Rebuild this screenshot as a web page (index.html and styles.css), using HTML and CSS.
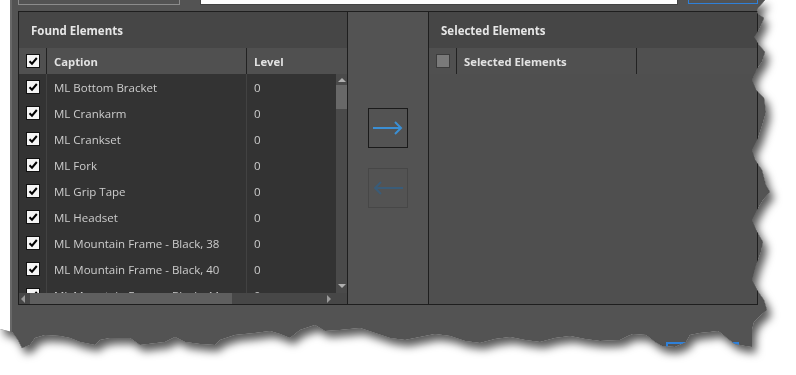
FILE: index.html
```html
<!DOCTYPE html>
<html lang="en">
<head>
    <meta charset="UTF-8">
    <title>Element Picker</title>
    <link rel="stylesheet" href="styles.css">
</head>
<body>
<div class="stage">
    <div class="shot">
        <div class="strip"></div>
        <div class="window">
            <div class="topbar">
                <div class="search-box"></div>
                <div class="text-input"></div>
                <div class="top-btn"></div>
            </div>

            <div class="panes">
                <!-- left: found elements -->
                <div class="pane found">
                    <div class="pane-title">Found Elements</div>
                    <div class="col-head">
                        <div class="cell cell-check"><span class="check on"></span></div>
                        <div class="cell cell-caption">Caption</div>
                        <div class="cell cell-level">Level</div>
                        <div class="cell cell-corner"></div>
                    </div>
                    <div class="list-body">
                        <ul class="list">
                            <li class="row"><div class="cell cell-check"><span class="check on"></span></div><div class="cell cell-caption">ML Bottom Bracket</div><div class="cell cell-level">0</div></li>
                            <li class="row"><div class="cell cell-check"><span class="check on"></span></div><div class="cell cell-caption">ML Crankarm</div><div class="cell cell-level">0</div></li>
                            <li class="row"><div class="cell cell-check"><span class="check on"></span></div><div class="cell cell-caption">ML Crankset</div><div class="cell cell-level">0</div></li>
                            <li class="row"><div class="cell cell-check"><span class="check on"></span></div><div class="cell cell-caption">ML Fork</div><div class="cell cell-level">0</div></li>
                            <li class="row"><div class="cell cell-check"><span class="check on"></span></div><div class="cell cell-caption">ML Grip Tape</div><div class="cell cell-level">0</div></li>
                            <li class="row"><div class="cell cell-check"><span class="check on"></span></div><div class="cell cell-caption">ML Headset</div><div class="cell cell-level">0</div></li>
                            <li class="row"><div class="cell cell-check"><span class="check on"></span></div><div class="cell cell-caption">ML Mountain Frame - Black, 38</div><div class="cell cell-level">0</div></li>
                            <li class="row"><div class="cell cell-check"><span class="check on"></span></div><div class="cell cell-caption">ML Mountain Frame - Black, 40</div><div class="cell cell-level">0</div></li>
                            <li class="row"><div class="cell cell-check"><span class="check on"></span></div><div class="cell cell-caption">ML Mountain Frame - Black, 44</div><div class="cell cell-level">0</div></li>
                        </ul>
                        <div class="vscroll">
                            <span class="arrow-up"></span>
                            <span class="vthumb"></span>
                            <span class="vspace"></span>
                            <span class="arrow-down"></span>
                        </div>
                    </div>
                    <div class="hscroll">
                        <div class="htrack">
                            <span class="arrow-left"></span>
                            <span class="hthumb"></span>
                            <span class="hspace"></span>
                            <span class="arrow-right"></span>
                        </div>
                        <div class="hcorner"></div>
                    </div>
                </div>

                <!-- middle: move buttons -->
                <div class="mover">
                    <button class="move-btn">
                        <svg width="38" height="38" viewBox="0 0 38 38"><path d="M4 19 H32 M26 13 L32 19 L26 25" fill="none" stroke="#3b8fd4" stroke-width="2"/></svg>
                    </button>
                    <button class="move-btn disabled">
                        <svg width="38" height="38" viewBox="0 0 38 38"><path d="M6 19 H34 M12 13 L6 19 L12 25" fill="none" stroke="#3a5c78" stroke-width="2"/></svg>
                    </button>
                </div>

                <!-- right: selected elements -->
                <div class="pane selected">
                    <div class="pane-title">Selected Elements</div>
                    <div class="col-head">
                        <div class="cell cell-check"><span class="check off"></span></div>
                        <div class="cell cell-sel">Selected Elements</div>
                        <div class="cell"></div>
                    </div>
                </div>
            </div>

            <div class="bottom">
                <div class="bottom-btn"></div>
                <div class="bottom-btn"></div>
            </div>
        </div>
    </div>
</div>
</body>
</html>
```

FILE: styles.css
```css
body{
    margin: 0;
    background-color: #fff;
    font-family: "Open Sans", "Noto Sans", sans-serif;
}
.stage{
    width: 796px;
    height: 375px;
    filter: drop-shadow(0 0 0.6px #2a2a2a) drop-shadow(4px 6px 4px rgba(0, 0, 0, .65));
}
/*torn screenshot edge*/
.shot{
    display: flex;
    width: 772px;
    height: 350px;
    background-color: #fff;
    clip-path: polygon(0 0, 765px 0, 758px 8px, 757px 13px, 764px 18px, 760px 28px, 754px 37px, 759px 45px, 765px 52px, 762px 62px, 756px 70px, 752px 80px, 756px 90px, 764px 98px, 766px 112px, 762px 126px, 758px 138px, 752px 150px, 755px 160px, 762px 170px, 766px 185px, 770px 192px, 763px 200px, 757px 210px, 752px 220px, 756px 230px, 763px 242px, 761px 252px, 756px 265px, 752px 280px, 757px 290px, 764px 300px, 767px 310px, 760px 316px, 754px 322px, 752px 330px, 752px 347px, 745px 346px, 735px 344px, 728px 339px, 722px 334px, 718px 331px, 710px 332px, 700px 333px, 690px 335px, 686px 342px, 675px 347px, 662px 346px, 655px 342px, 646px 335px, 633px 334px, 628px 336px, 620px 340px, 600px 341px, 585px 339px, 570px 336px, 555px 338px, 540px 342px, 525px 340px, 510px 337px, 495px 339px, 480px 343px, 465px 341px, 450px 336px, 435px 334px, 420px 337px, 405px 340px, 390px 338px, 375px 333px, 360px 328px, 340px 330px, 325px 331px, 315px 325px, 300px 330px, 290px 338px, 280px 334px, 270px 331px, 255px 333px, 235px 335px, 220px 340px, 215px 345px, 200px 344px, 185px 342px, 175px 337px, 165px 342px, 140px 345px, 130px 338px, 110px 338px, 100px 340px, 95px 345px, 80px 342px, 70px 338px, 60px 336px, 45px 335px, 35px 338px, 30px 345px, 22px 348px, 18px 340px, 12px 332px, 0 329px);
}
.strip{
    width: 10px;
    flex: none;
}
.window{
    flex: 1;
    display: flex;
    flex-direction: column;
    overflow: hidden;
    background-color: #535353;
    border-left: 2px solid #686868;
}
/*top bar remains*/
.topbar{
    flex: none;
    height: 11px;
    display: flex;
    align-items: flex-start;
    padding-left: 6px;
}
.search-box{
    width: 160px;
    height: 4px;
    border: 1px solid #8c8c8c;
    border-top: none;
}
.text-input{
    width: 476px;
    height: 4px;
    margin-left: 20px;
    background-color: #fff;
    border: 1px solid #444;
    border-top: none;
}
.top-btn{
    width: 68px;
    height: 3px;
    margin-left: 10px;
    border: 1px solid #2f80d8;
    border-top: none;
}
/*panes*/
.panes{
    flex: none;
    display: flex;
    width: 738px;
    height: 292px;
    margin-left: 6px;
    border: 1px solid #1e1e1e;
}
.pane{
    width: 328px;
    display: flex;
    flex-direction: column;
    background-color: #4f4f4f;
}
.pane-title{
    flex: none;
    height: 36px;
    line-height: 37px;
    padding-left: 12px;
    background-color: #464646;
    color: #e6e6e6;
    font-size: 11.5px;
    font-weight: bold;
}
.col-head{
    flex: none;
    height: 26px;
    display: flex;
    background-color: #505050;
    color: #e2e2e2;
    font-size: 11.3px;
    font-weight: bold;
}
.cell{
    display: flex;
    align-items: center;
    padding-left: 7px;
    box-sizing: border-box;
    white-space: nowrap;
    overflow: hidden;
}
.cell-check{
    width: 28px;
    border-right: 1px solid #222;
}
.cell-caption{
    width: 200px;
    border-right: 1px solid #222;
}
.cell-level{
    width: 89px;
}
.cell-corner{
    width: 11px;
    padding: 0;
}
.cell-sel{
    width: 180px;
    border-right: 1px solid #222;
}
.check{
    display: inline-block;
    width: 14px;
    height: 14px;
    box-sizing: border-box;
    border: 1px solid #111;
}
.check.on{
    background: #f4f4f4 url("data:image/svg+xml;utf8,<svg xmlns='http://www.w3.org/2000/svg' width='12' height='12' viewBox='0 0 12 12'><path d='M2.5 6.2 L5 8.7 L9.8 3' fill='none' stroke='black' stroke-width='2'/></svg>") no-repeat center;
}
.check.off{
    background-color: #7a7a7a;
    border-color: #3c3c3c;
}
.list-body{
    flex: none;
    height: 219px;
    display: flex;
    overflow: hidden;
}
.list{
    list-style: none;
    margin: 0;
    padding: 0;
    width: 317px;
    background-color: #333;
    color: #cdcdcd;
    font-size: 11.5px;
}
.row{
    height: 26px;
    display: flex;
}
.row .cell-check,
.row .cell-caption{
    border-right-color: #424242;
}
/*scrollbars*/
.vscroll{
    width: 11px;
    display: flex;
    flex-direction: column;
    align-items: center;
    background-color: #4a4a4a;
}
.arrow-up{
    margin-top: 4px;
    border: 4px solid transparent;
    border-top: none;
    border-bottom: 4px solid #b0b0b0;
}
.vthumb{
    width: 11px;
    height: 24px;
    margin-top: 3px;
    background-color: #686868;
}
.vspace{
    flex: 1;
}
.arrow-down{
    margin-bottom: 5px;
    border: 4px solid transparent;
    border-bottom: none;
    border-top: 4px solid #b0b0b0;
}
.hscroll{
    flex: none;
    height: 11px;
    display: flex;
    background-color: #474747;
}
.htrack{
    width: 317px;
    display: flex;
    align-items: center;
}
.arrow-left{
    margin-left: 2px;
    border: 4px solid transparent;
    border-left: none;
    border-right: 4px solid #9a9a9a;
}
.hthumb{
    width: 202px;
    height: 11px;
    margin-left: 5px;
    background-color: #5f5f5f;
}
.hspace{
    flex: 1;
}
.arrow-right{
    margin-right: 5px;
    border: 4px solid transparent;
    border-right: none;
    border-left: 4px solid #9a9a9a;
}
.hcorner{
    width: 11px;
}
/*middle*/
.mover{
    flex: none;
    width: 82px;
    display: flex;
    flex-direction: column;
    align-items: center;
    gap: 20px;
    padding-top: 96px;
    box-sizing: border-box;
    border-left: 1px solid #1e1e1e;
    border-right: 1px solid #1e1e1e;
    background-color: #535353;
}
.move-btn{
    width: 40px;
    height: 40px;
    padding: 0;
    border: 1px solid #1a1a1a;
    background: transparent;
    outline: none;
}
.move-btn svg{
    display: block;
}
.move-btn.disabled{
    border-color: #474747;
}
.selected{
    flex: 1;
}
/*bottom buttons*/
.bottom{
    flex: none;
    display: flex;
    padding: 37px 0 0 654px;
    gap: 5px;
}
.bottom-btn{
    width: 30px;
    height: 20px;
    border: 2px solid #2f80d8;
}
```
